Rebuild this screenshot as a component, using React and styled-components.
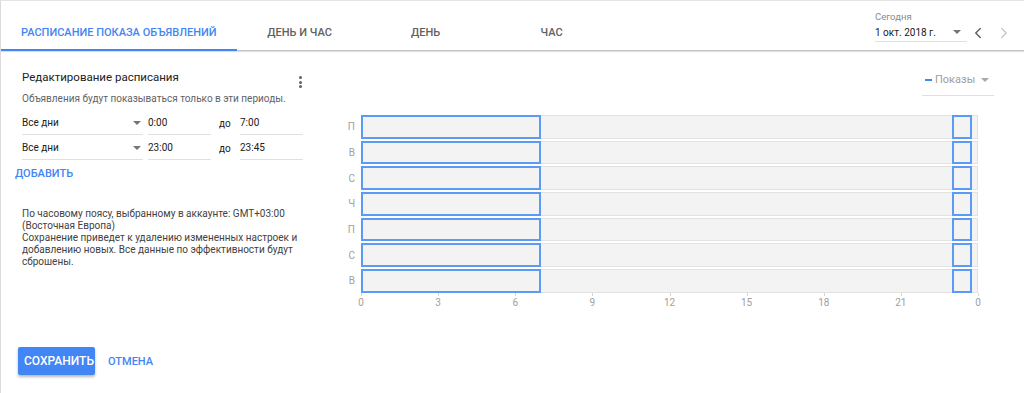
import React from "react";
import styled, { createGlobalStyle } from "styled-components";
import { ChevronLeft, ChevronRight } from "lucide-react";

const GlobalStyle = createGlobalStyle`
    html, body {
        margin: 0;
        padding: 0;
        background: #fff;
    }
    body {
        font-family: Roboto, "Noto Sans", Arial, sans-serif;
        color: #212121;
    }
    * {
        box-sizing: border-box;
    }
`;

const Page = styled.div`
    width: 1024px;
    height: 393px;
    display: flex;
    flex-direction: column;
    border-top: 1px solid #e4e4e4;
    border-left: 1px solid #dadada;
    overflow: hidden;
`;

const Header = styled.div`
    height: 50px;
    flex-shrink: 0;
    display: flex;
    align-items: stretch;
    border-bottom: 1px solid #c4c4c4;
    box-shadow: 0 1px 1px rgba(0, 0, 0, 0.12);
    position: relative;
    z-index: 1;
`;

const Tab = styled.div`
    min-width: 126px;
    padding: 14px 20px 0;
    margin-bottom: -1px;
    display: flex;
    align-items: center;
    justify-content: center;
    font-size: 11px;
    font-weight: 500;
    white-space: nowrap;
    color: ${({active}) => active ? "#4285f4" : "#616161"};
    border-bottom: 2px solid ${({active}) => active ? "#4285f4" : "transparent"};
    cursor: pointer;
`;

const DatePicker = styled.div`
    margin-left: auto;
    padding: 9px 11px 0 0;
    display: flex;
    align-items: flex-end;
    align-self: flex-start;
`;

const DateColumn = styled.div`
    display: flex;
    flex-direction: column;
`;

const DateLabel = styled.div`
    font-size: 9.5px;
    line-height: 13px;
    color: #8a8a8a;
`;

const DateField = styled.div`
    width: 92px;
    height: 19px;
    display: flex;
    align-items: center;
    justify-content: space-between;
    padding-right: 6px;
    font-size: 10px;
    color: #212121;
    border-bottom: 1px solid #e0e0e0;
`;

const NavRow = styled.div`
    display: flex;
    gap: 8px;
    margin-left: 2px;
    height: 19px;
    align-items: center;
`;

const NavButton = styled.span`
    display: flex;
    width: 18px;
    height: 18px;
    align-items: center;
    justify-content: center;
    color: ${({disabled}) => disabled ? "#c4c4c4" : "#5f6368"};
`;

const Caret = styled.span`
    display: inline-block;
    width: 0;
    height: 0;
    border-left: 4px solid transparent;
    border-right: 4px solid transparent;
    border-top: 4px solid ${({color}) => color || "#757575"};
`;

const Body = styled.div`
    flex: 1;
    display: flex;
    min-height: 0;
`;

const LeftPanel = styled.div`
    width: 320px;
    flex-shrink: 0;
    padding: 17px 0 0 21px;
`;

const TitleRow = styled.div`
    width: 280px;
    display: flex;
    justify-content: space-between;
    align-items: flex-start;
`;

const Title = styled.div`
    font-size: 11.5px;
    line-height: 18px;
    color: #212121;
`;

const Kebab = styled.div`
    width: 4px;
    margin-top: 8px;
    display: flex;
    flex-direction: column;
    align-items: center;
    gap: 1.5px;

    span {
        width: 3px;
        height: 3px;
        border-radius: 50%;
        background: #616161;
    }
`;

const Subtitle = styled.div`
    margin-top: 4px;
    font-size: 10px;
    line-height: 14px;
    color: #5f6368;
`;

const Schedule = styled.div`
    margin-top: 5px;
    display: flex;
    flex-direction: column;
    gap: 1px;
`;

const ScheduleRow = styled.div`
    display: flex;
    align-items: stretch;
    height: 24px;
`;

const Field = styled.div`
    width: ${({width}) => width}px;
    margin-right: ${({gap}) => gap || 0}px;
    display: flex;
    align-items: center;
    justify-content: space-between;
    padding-right: 2px;
    font-size: 10px;
    color: #212121;
    border-bottom: 1px solid #e0e0e0;
`;

const Until = styled.div`
    width: 29px;
    padding-left: 8px;
    display: flex;
    align-items: center;
    font-size: 10px;
    color: #212121;
`;

const AddButton = styled.div`
    margin: 7px 0 0 -7px;
    font-size: 11px;
    line-height: 14px;
    font-weight: 500;
    color: #4285f4;
    cursor: pointer;
`;

const Info = styled.div`
    margin-top: 27px;
    font-size: 10px;
    line-height: 12px;
    color: #424242;

    span {
        display: block;
        white-space: nowrap;
    }
`;

const ChartPanel = styled.div`
    flex: 1;
    padding: 15px 0 0 19px;
    display: flex;
    flex-direction: column;
`;

const Legend = styled.div`
    align-self: flex-end;
    margin-right: 30px;
    width: 72px;
    height: 30px;
    padding: 0 0 2px 3px;
    display: flex;
    align-items: center;
    border-bottom: 1px solid #e0e0e0;
    font-size: 11px;
    color: #9e9e9e;
`;

const LegendDash = styled.span`
    width: 7px;
    height: 2px;
    background: #4285f4;
    margin-right: 3px;
`;

const LegendCaret = styled(Caret)`
    margin-left: 6px;
    border-top-color: #a8a8a8;
`;

const ChartGrid = styled.div`
    margin-top: 19px;
    display: grid;
    grid-template-columns: 17px 617px;
    grid-template-rows: repeat(7, 23.5px) 20px;
    column-gap: 4px;
    row-gap: 2.2px;
`;

const DayLabel = styled.div`
    align-self: center;
    text-align: right;
    padding-right: 2px;
    font-size: 10px;
    color: #a0a0a0;
`;

const Track = styled.div`
    position: relative;
    background: #f3f3f3;
    box-shadow: inset 0 0 0 1px #e2e2e2;
`;

const Block = styled.div`
    position: absolute;
    top: 0;
    bottom: 0;
    border: 2px solid #5b9bf7;
    background: #f3f3f3;
`;

const Axis = styled.div`
    grid-column: 2;
    position: relative;
    margin-top: -2px;
`;

const Tick = styled.div`
    position: absolute;
    top: 0;
    width: 1px;
    height: 3px;
    background: #d6d6d6;
`;

const TickLabel = styled.div`
    position: absolute;
    top: 4px;
    transform: translateX(-50%);
    font-size: 10px;
    line-height: 12px;
    color: #a0a0a0;
`;

const Footer = styled.div`
    flex-shrink: 0;
    display: flex;
    align-items: center;
    padding: 0 0 18px 17px;
`;

const SaveButton = styled.button`
    width: 77px;
    height: 28px;
    border: none;
    border-radius: 2px;
    background: #4285f4;
    color: #fff;
    font-family: inherit;
    font-size: 12px;
    font-weight: 500;
    box-shadow: 0 2px 3px rgba(0, 0, 0, 0.28);
    cursor: pointer;
`;

const TextButton = styled.span`
    margin-left: 13px;
    font-size: 11px;
    font-weight: 500;
    color: #4285f4;
    cursor: pointer;
`;

const tabs = ["Расписание показа объявлений", "День и час", "День", "Час"];
const days = ["П", "В", "С", "Ч", "П", "С", "В"];
const periods = [
    {start: 0, end: 7},
    {start: 23, end: 23.75},
];
const ticks = [0, 3, 6, 9, 12, 15, 18, 21, 24];

const pct = (hours) => `${(hours / 24) * 100}%`;

const App = () => (
    <>
        <GlobalStyle />
        <Page>
            <Header>
                {tabs.map((t, i) => (
                    <Tab key={t} active={i === 0}>{t.toUpperCase()}</Tab>
                ))}
                <DatePicker>
                    <DateColumn>
                        <DateLabel>Сегодня</DateLabel>
                        <DateField>
                            1 окт. 2018 г.
                            <Caret />
                        </DateField>
                    </DateColumn>
                    <NavRow>
                        <NavButton><ChevronLeft size={18} strokeWidth={2} /></NavButton>
                        <NavButton disabled><ChevronRight size={18} strokeWidth={1.6} /></NavButton>
                    </NavRow>
                </DatePicker>
            </Header>

            <Body>
                <LeftPanel>
                    <TitleRow>
                        <Title>Редактирование расписания</Title>
                        <Kebab><span /><span /><span /></Kebab>
                    </TitleRow>
                    <Subtitle>Объявления будут показываться только в эти периоды.</Subtitle>

                    <Schedule>
                        <ScheduleRow>
                            <Field width={121} gap={5}>Все дни<Caret /></Field>
                            <Field width={63}>0:00</Field>
                            <Until>до</Until>
                            <Field width={63}>7:00</Field>
                        </ScheduleRow>
                        <ScheduleRow>
                            <Field width={121} gap={5}>Все дни<Caret /></Field>
                            <Field width={63}>23:00</Field>
                            <Until>до</Until>
                            <Field width={63}>23:45</Field>
                        </ScheduleRow>
                    </Schedule>

                    <AddButton>ДОБАВИТЬ</AddButton>

                    <Info>
                        <span>По часовому поясу, выбранному в аккаунте: GMT+03:00</span>
                        <span>(Восточная Европа)</span>
                        <span>Сохранение приведет к удалению измененных настроек и</span>
                        <span>добавлению новых. Все данные по эффективности будут</span>
                        <span>сброшены.</span>
                    </Info>
                </LeftPanel>

                <ChartPanel>
                    <Legend>
                        <LegendDash />
                        Показы
                        <LegendCaret />
                    </Legend>

                    <ChartGrid>
                        {days.map((d, i) => (
                            <React.Fragment key={i}>
                                <DayLabel>{d}</DayLabel>
                                <Track>
                                    {periods.map((p) => (
                                        <Block
                                            key={p.start}
                                            style={{left: pct(p.start), width: pct(p.end - p.start)}}
                                        />
                                    ))}
                                </Track>
                            </React.Fragment>
                        ))}
                        <Axis>
                            {ticks.map((h) => (
                                <React.Fragment key={h}>
                                    <Tick style={{left: pct(h)}} />
                                    <TickLabel style={{left: pct(h)}}>{h % 24}</TickLabel>
                                </React.Fragment>
                            ))}
                        </Axis>
                    </ChartGrid>
                </ChartPanel>
            </Body>

            <Footer>
                <SaveButton>СОХРАНИТЬ</SaveButton>
                <TextButton>ОТМЕНА</TextButton>
            </Footer>
        </Page>
    </>
);

export default App;
